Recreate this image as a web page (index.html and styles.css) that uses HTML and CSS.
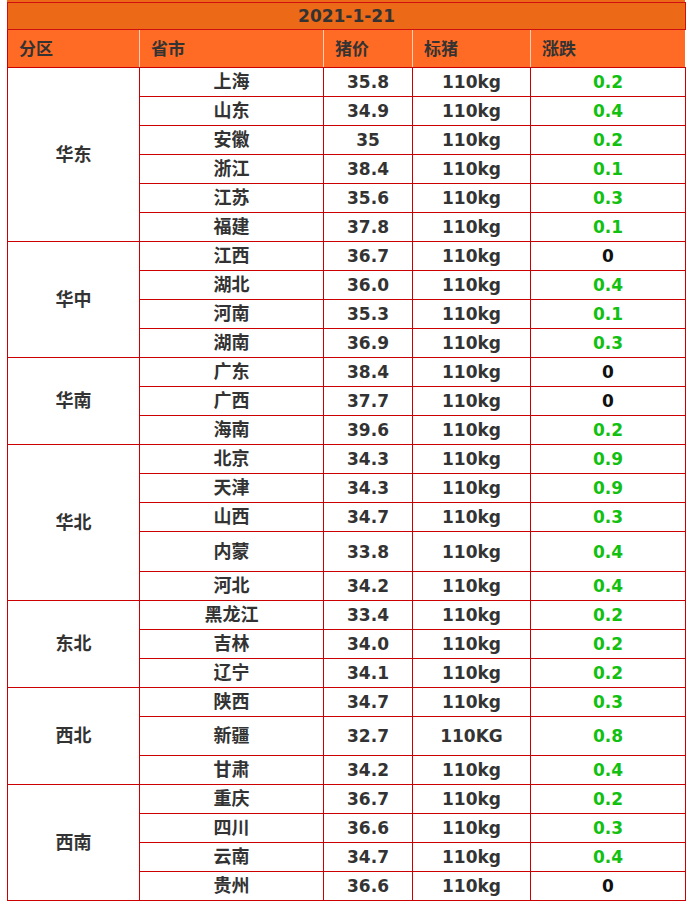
FILE: index.html
```html
<!DOCTYPE html>
<html lang="zh-CN">
<head>
<meta charset="utf-8">
<title>2021-1-21 猪价</title>
<link rel="stylesheet" href="styles.css">
</head>
<body>
<div class="wrap">
  <div class="topband"></div>
  <table class="price">
    <colgroup>
      <col class="c1"><col class="c2"><col class="c3"><col class="c4"><col class="c5">
    </colgroup>
    <tr class="date"><td colspan="5">2021-1-21</td></tr>
    <tr class="head"><td>分区</td><td>省市</td><td>猪价</td><td>标猪</td><td>涨跌</td></tr>

    <tr class="d"><td class="reg" rowspan="6">华东</td><td class="prov">上海</td><td>35.8</td><td class="kg">110kg</td><td class="up">0.2</td></tr>
    <tr class="d"><td class="prov">山东</td><td>34.9</td><td class="kg">110kg</td><td class="up">0.4</td></tr>
    <tr class="d"><td class="prov">安徽</td><td>35</td><td class="kg">110kg</td><td class="up">0.2</td></tr>
    <tr class="d"><td class="prov">浙江</td><td>38.4</td><td class="kg">110kg</td><td class="up">0.1</td></tr>
    <tr class="d"><td class="prov">江苏</td><td>35.6</td><td class="kg">110kg</td><td class="up">0.3</td></tr>
    <tr class="d"><td class="prov">福建</td><td>37.8</td><td class="kg">110kg</td><td class="up">0.1</td></tr>

    <tr class="d"><td class="reg" rowspan="4">华中</td><td class="prov">江西</td><td>36.7</td><td class="kg">110kg</td><td class="flat">0</td></tr>
    <tr class="d"><td class="prov">湖北</td><td>36.0</td><td class="kg">110kg</td><td class="up">0.4</td></tr>
    <tr class="d"><td class="prov">河南</td><td>35.3</td><td class="kg">110kg</td><td class="up">0.1</td></tr>
    <tr class="d"><td class="prov">湖南</td><td>36.9</td><td class="kg">110kg</td><td class="up">0.3</td></tr>

    <tr class="d"><td class="reg" rowspan="3">华南</td><td class="prov">广东</td><td>38.4</td><td class="kg">110kg</td><td class="flat">0</td></tr>
    <tr class="d"><td class="prov">广西</td><td>37.7</td><td class="kg">110kg</td><td class="flat">0</td></tr>
    <tr class="d"><td class="prov">海南</td><td>39.6</td><td class="kg">110kg</td><td class="up">0.2</td></tr>

    <tr class="d"><td class="reg" rowspan="5">华北</td><td class="prov">北京</td><td>34.3</td><td class="kg">110kg</td><td class="up">0.9</td></tr>
    <tr class="d"><td class="prov">天津</td><td>34.3</td><td class="kg">110kg</td><td class="up">0.9</td></tr>
    <tr class="d"><td class="prov">山西</td><td>34.7</td><td class="kg">110kg</td><td class="up">0.3</td></tr>
    <tr class="d tall"><td class="prov">内蒙</td><td>33.8</td><td class="kg">110kg</td><td class="up">0.4</td></tr>
    <tr class="d"><td class="prov">河北</td><td>34.2</td><td class="kg">110kg</td><td class="up">0.4</td></tr>

    <tr class="d"><td class="reg" rowspan="3">东北</td><td class="prov">黑龙江</td><td>33.4</td><td class="kg">110kg</td><td class="up">0.2</td></tr>
    <tr class="d"><td class="prov">吉林</td><td>34.0</td><td class="kg">110kg</td><td class="up">0.2</td></tr>
    <tr class="d"><td class="prov">辽宁</td><td>34.1</td><td class="kg">110kg</td><td class="up">0.2</td></tr>

    <tr class="d"><td class="reg" rowspan="3">西北</td><td class="prov">陕西</td><td>34.7</td><td class="kg">110kg</td><td class="up">0.3</td></tr>
    <tr class="d tall2"><td class="prov">新疆</td><td>32.7</td><td class="kg">110KG</td><td class="up">0.8</td></tr>
    <tr class="d"><td class="prov">甘肃</td><td>34.2</td><td class="kg">110kg</td><td class="up">0.4</td></tr>

    <tr class="d"><td class="reg" rowspan="4">西南</td><td class="prov">重庆</td><td>36.7</td><td class="kg">110kg</td><td class="up">0.2</td></tr>
    <tr class="d"><td class="prov">四川</td><td>36.6</td><td class="kg">110kg</td><td class="up">0.3</td></tr>
    <tr class="d"><td class="prov">云南</td><td>34.7</td><td class="kg">110kg</td><td class="up">0.4</td></tr>
    <tr class="d"><td class="prov">贵州</td><td>36.6</td><td class="kg">110kg</td><td class="flat">0</td></tr>
  </table>
</div>
</body>
</html>
```

FILE: styles.css
```css
html, body {
  margin: 0;
  padding: 0;
  background: #ffffff;
}

body {
  font-family: "DejaVu Sans", "Noto Sans CJK SC", sans-serif;
  color: #333333;
}

.wrap {
  margin-left: 7px;
  width: 678px;
}

.topband {
  height: 2px;
  background: #ec6918;
}

.price {
  border-collapse: collapse;
  table-layout: fixed;
  width: 678px;
}

.c1 { width: 132px; }
.c2 { width: 184px; }
.c3 { width: 89px; }
.c4 { width: 118px; }
.c5 { width: 155px; }

.price td {
  border: 1px solid #cc0000;
  padding: 0;
  text-align: center;
  vertical-align: middle;
  font-size: 17px;
  font-weight: bold;
  line-height: 20px;
  white-space: nowrap;
}

.date td {
  height: 26px;
  background: #ec6918;
  color: #333333;
  border-color: #d01010;
}

.head td {
  height: 37px;
  background: #ff6b24;
  text-align: left;
  padding-left: 11px;
  border-top-color: #d01010;
  border-left-color: #f9cfb5;
  border-right-color: #f9cfb5;
  border-bottom-color: #cc0000;
}

.head td:first-child {
  border-left-color: #cc0000;
}

.head td:last-child {
  border-right-color: #ffffff;
}

.d td {
  height: 28px;
}

.d.tall td {
  height: 39px;
}

.d.tall2 td {
  height: 38px;
}

.price td.prov,
.price td.reg {
  font-size: 18px;
}

.kg {
  padding-bottom: 3px;
}

.up {
  color: #12c012;
}

.flat {
  color: #111111;
}
```
